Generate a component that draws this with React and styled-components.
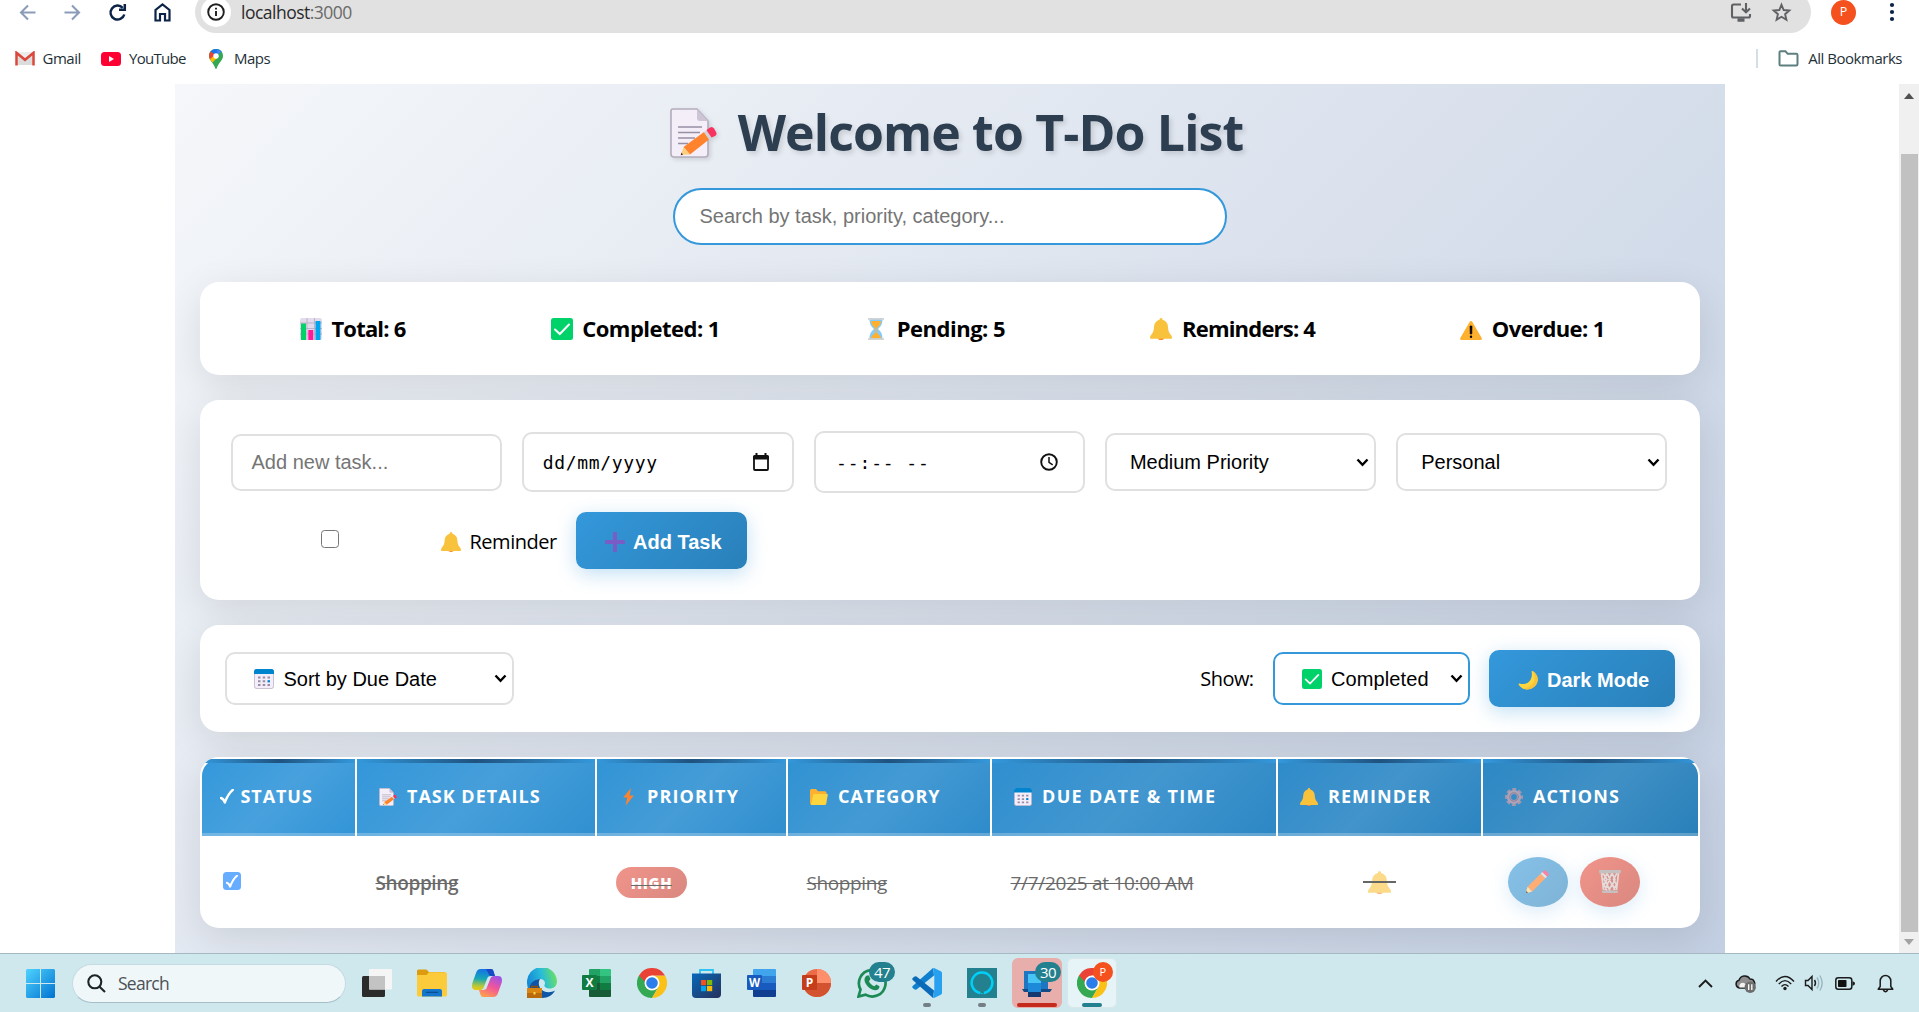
import React from "react";
import styled, { createGlobalStyle, css } from "styled-components";

const UI = `"Open Sans", "Noto Sans", sans-serif`;
const ARIAL = `"Liberation Sans", Arial, sans-serif`;

const Global = createGlobalStyle`
  *, *::before, *::after { box-sizing: border-box; }
  html, body { margin: 0; padding: 0; overflow: hidden; }
  body { font-family: ${UI}; color: #000; background: #fff; }
  svg { display: block; flex: none; }
`;

/* ---------- shared ---------- */

const Text = styled.span`
  font-family: ${(p) => p.$font || UI};
  font-size: ${(p) => p.$size}px;
  font-weight: ${(p) => p.$weight || 400};
  letter-spacing: ${(p) => p.$track || 0}px;
  color: ${(p) => p.$color || "inherit"};
  margin-left: ${(p) => p.$ml || 0}px;
  white-space: pre;
  line-height: 1.3;
`;

const Screen = styled.div`
  width: 1919px;
  height: 1012px;
  display: flex;
  flex-direction: column;
  overflow: hidden;
  background: #fff;
`;

/* ---------- browser chrome ---------- */

const Toolbar = styled.div`
  height: 33px;
  flex: none;
  display: flex;
  align-items: flex-end;
  padding-left: 17px;
  padding-right: 17px;
`;
const NavButtons = styled.div`
  height: 42px;
  width: 178px;
  flex: none;
  display: flex;
  align-items: center;
  gap: 24px;
`;
const Address = styled.div`
  height: 42px;
  width: 1616px;
  flex: none;
  border-radius: 21px;
  background: #e1e1e1;
  display: flex;
  align-items: center;
  padding: 0 19px 0 6px;
`;
const SiteInfo = styled.div`
  width: 30px;
  height: 30px;
  border-radius: 50%;
  background: #fff;
  display: grid;
  place-items: center;
  margin-right: 10px;
`;
const AddressTools = styled.div`
  margin-left: auto;
  display: flex;
  align-items: center;
  gap: 19px;
`;
const Profile = styled.div`
  height: 42px;
  margin-left: 20px;
  flex: 1;
  display: flex;
  align-items: center;
  justify-content: space-between;
`;
const Avatar = styled.div`
  width: 25px;
  height: 25px;
  border-radius: 50%;
  background: #f4511e;
  color: #fff;
  display: grid;
  place-items: center;
`;
const Bookmarks = styled.div`
  height: 51px;
  flex: none;
  display: flex;
  align-items: center;
  padding: 0 17px 0 15px;
  color: #1f3138;
`;
const Bookmark = styled.div`
  display: flex;
  align-items: center;
  gap: ${(p) => p.$gap}px;
  width: ${(p) => p.$width}px;
`;
const Divider = styled.div`
  width: 2px;
  height: 19px;
  background: #d3dee6;
  margin: 0 20px 0 auto;
`;

/* ---------- page ---------- */

const Viewport = styled.div`
  height: 869px;
  flex: none;
  display: flex;
  justify-content: flex-end;
`;
const Page = styled.main`
  width: 1550px;
  height: 869px;
  margin-right: 174px;
  padding: 18px 25px 0;
  background: linear-gradient(135deg, #f5f7fa 0%, #c3cfe2 100%);
  display: flex;
  flex-direction: column;
  overflow: hidden;
`;
const ScrollTrack = styled.div`
  width: 20px;
  background: #f0f0f0;
  display: flex;
  flex-direction: column;
  align-items: center;
  padding-top: 9px;
`;
const ScrollThumb = styled.div`
  width: 17px;
  height: 778px;
  margin: 55px 0 7px;
  background: #c1c1c1;
`;

const Title = styled.h1`
  margin: 0;
  height: 60px;
  display: flex;
  align-items: center;
  justify-content: center;
  padding-left: 13px;
  gap: 21px;
  font-size: 50px;
  font-weight: 700;
  line-height: 60px;
  letter-spacing: -0.87px;
  color: #2c3e50;
  white-space: nowrap;
  text-shadow: 2.5px 2.5px 5px rgba(0, 0, 0, 0.13);
  svg { filter: drop-shadow(2px 2px 2px rgba(0, 0, 0, 0.12)); margin-top: 2px; }
`;
const SearchBox = styled.div`
  width: 554px;
  height: 57px;
  flex: none;
  margin: 26px auto 37px;
  border: 2px solid #3498db;
  border-radius: 31px;
  background: #fff;
  display: flex;
  align-items: center;
  padding-left: 24.5px;
  font: 20px ${ARIAL};
  color: #757575;
`;

const card = css`
  flex: none;
  background: #fff;
  border-radius: 19px;
  box-shadow: 0 10px 38px rgba(0, 0, 0, 0.1);
`;
const Stats = styled.section`
  ${card}
  height: 93px;
  padding: 0 24px 0 26px;
  display: flex;
  align-items: center;
  justify-content: space-around;
`;
const Stat = styled.div`
  display: flex;
  align-items: center;
  padding-left: 2.5px;
  gap: 9.5px;
  svg { margin-top: 1px; }
`;

const Form = styled.section`
  ${card}
  height: 200px;
  margin-top: 25px;
  padding: 31px 32.5px 31px 31px;
  display: flex;
  flex-direction: column;
  gap: 19px;
`;
const Fields = styled.div`
  height: 62px;
  display: grid;
  grid-template-columns: repeat(5, 1fr);
  gap: 20px;
  align-items: center;
`;
const Control = styled.div`
  height: ${(p) => p.$h}px;
  width: ${(p) => (p.$w ? `${p.$w}px` : "auto")};
  border: 2px solid ${(p) => (p.$active ? "#3498db" : "#e0e0e0")};
  border-radius: 10px;
  background: #fff;
  display: flex;
  align-items: center;
  padding: 0 ${(p) => p.$pr || 5}px 0 ${(p) => p.$pl}px;
  font: ${(p) => (p.$mono ? `18px "DejaVu Sans Mono", monospace` : `20px ${ARIAL}`)};
  letter-spacing: ${(p) => p.$track || 0}px;
  color: ${(p) => (p.$muted ? "#757575" : "#000")};
  white-space: pre;
  & > svg:last-child { margin-left: auto; }
`;
const ReminderRow = styled.div`
  height: 57px;
  display: flex;
  align-items: center;
`;
const CheckCell = styled.div`
  width: 197px;
  height: 57px;
  padding-bottom: 4px;
  display: flex;
  justify-content: center;
  align-items: center;
`;
const Checkbox = styled.div`
  width: 18px;
  height: 18px;
  border-radius: 3.5px;
  border: ${(p) => (p.$checked ? "none" : "1.5px solid #767676")};
  background: ${(p) => (p.$checked ? "#66acff" : "#fff")};
  display: grid;
  place-items: center;
`;
const ReminderLabel = styled.div`
  width: 148px;
  padding: 2px 0 0 13px;
  display: flex;
  align-items: center;
`;
const Button = styled.div`
  height: 57px;
  width: ${(p) => p.$w}px;
  padding: 3px 0 0 29px;
  border-radius: 10px;
  background: linear-gradient(135deg, #3498db, #2980b9);
  box-shadow: 0 5px 19px rgba(52, 152, 219, 0.3);
  color: #fff;
  display: flex;
  align-items: center;
  gap: ${(p) => p.$gap}px;
  font: 700 20px ${ARIAL};
  white-space: nowrap;
`;

const Filters = styled.section`
  ${card}
  height: 107px;
  margin-top: 25px;
  padding: 0 25px;
  display: flex;
  align-items: center;
`;
const FilterRight = styled.div`
  margin-left: auto;
  display: flex;
  align-items: center;
  gap: 19px;
`;

/* ---------- table ---------- */

const columns = "153px 238px 189px 202px 284px 203px 215px";
const Table = styled.section`
  ${card}
  height: 171px;
  margin-top: 25px;
  padding: 2px;
  overflow: hidden;
`;
const HeadRow = styled.div`
  height: 77px;
  display: grid;
  grid-template-columns: ${columns};
  gap: 2px;
`;
const shades = [
  ["#3498db", "#3294d7"],
  ["#3397da", "#3090d1"],
  ["#3194d6", "#2f8ece"],
  ["#3092d3", "#2e8bca"],
  ["#2f8fd0", "#2c87c4"],
  ["#2e8bca", "#2b84c0"],
  ["#2c88c5", "#2980b9"],
];
const HeadCell = styled.div`
  position: relative;
  display: flex;
  align-items: center;
  padding: 0 0 2px 18px;
  color: #fff;
  border-radius: ${(p) => (p.$i === 0 ? "17px 0 0 0" : p.$i === 6 ? "0 17px 0 0" : 0)};
  background:
    linear-gradient(135deg, transparent 0%, rgba(255, 255, 255, 0.1) 50%, transparent 100%),
    linear-gradient(135deg, ${(p) => shades[p.$i][0]}, ${(p) => shades[p.$i][1]});
  &::before {
    content: "";
    position: absolute;
    inset: 0 0 auto 0;
    height: 4px;
    background: linear-gradient(90deg, #3498db, #1f527f, #3498db);
  }
  &::after {
    content: "";
    position: absolute;
    inset: auto 0 0 0;
    height: 3px;
    background: rgba(255, 255, 255, 0.25);
  }
`;
const HeadIcon = styled.span`
  width: 18px;
  margin-left: 4px;
  margin-right: 10px;
  display: grid;
  place-items: center;
`;
const BodyRow = styled.div`
  height: 90px;
  display: grid;
  grid-template-columns: ${columns};
  gap: 2px;
  color: #6c6c6c;
`;
const Cell = styled.div`
  display: flex;
  align-items: center;
  padding-top: ${(p) => (p.$pt === undefined ? 4 : p.$pt)}px;
  padding-left: ${(p) => (p.$pl === undefined ? 18.5 : p.$pl)}px;
  gap: ${(p) => p.$gap || 0}px;
`;
const Struck = styled(Text)`
  text-decoration: line-through #666;
  text-decoration-thickness: 1.25px;
`;
const Pill = styled.span`
  width: 71px;
  height: 31px;
  border-radius: 16px;
  background: linear-gradient(135deg, #f1948a, #d98880);
  display: grid;
  place-items: center;
`;
const PillText = styled.span`
  position: relative;
  color: #fff;
  font-size: 15px;
  font-weight: 800;
  letter-spacing: 0.6px;
  line-height: 20px;
  &::after {
    content: "";
    position: absolute;
    left: 0;
    right: 0;
    top: 12px;
    height: 1px;
    background: #6a6a6a;
  }
`;
const StruckIcon = styled.span`
  position: relative;
  width: 33px;
  display: grid;
  place-items: center;
  &::after {
    content: "";
    position: absolute;
    left: 0;
    right: 0;
    top: 10px;
    height: 2px;
    background: #666;
  }
`;
const RoundButton = styled.div`
  width: 60.5px;
  height: 50px;
  border-radius: 50%;
  display: grid;
  place-items: center;
  background: ${(p) =>
    p.$danger ? "linear-gradient(135deg, #f1948a, #d98880)" : "linear-gradient(135deg, #85c1e9, #7fb3d5)"};
  box-shadow: 0 5px 19px rgba(52, 152, 219, 0.18);
`;

/* ---------- taskbar ---------- */

const Taskbar = styled.footer`
  height: 59px;
  flex: none;
  border-top: 1px solid #a6b8c2;
  background: #cee8ee;
  display: flex;
  align-items: center;
  padding: 0 25px 0 26px;
`;
const TaskSearch = styled.div`
  width: 274px;
  height: 39px;
  margin: 0 3px 0 17px;
  padding-left: 14px;
  border-radius: 20px;
  border: 1px solid #c3dbe2;
  border-bottom-color: #a5bfc8;
  background: #f0f7f9;
  display: flex;
  align-items: center;
  color: #4b5256;
`;
const Slot = styled.div`
  position: relative;
  width: 55px;
  height: 58px;
  display: grid;
  place-items: center;
`;
const Tile = styled.div`
  width: 50px;
  height: 50px;
  border-radius: 6px;
  background: ${(p) => p.$bg || "transparent"};
  box-shadow: ${(p) => (p.$outlined ? "inset 0 0 0 1px #d9e6ea" : "none")};
  display: grid;
  place-items: center;
`;
const Indicator = styled.span`
  position: absolute;
  bottom: 5px;
  left: 50%;
  transform: translateX(-50%);
  width: ${(p) => p.$w}px;
  height: 4px;
  border-radius: 2px;
  background: ${(p) => p.$color};
`;
const Badge = styled.span`
  position: absolute;
  top: 8px;
  left: ${(p) => p.$left}px;
  width: ${(p) => p.$w}px;
  height: 20px;
  border-radius: 10px;
  background: ${(p) => p.$bg};
  color: #fff;
  display: grid;
  place-items: center;
  font: ${(p) => p.$size || 15}px/20px ${UI};
  letter-spacing: -0.6px;
`;
const Tray = styled.div`
  margin-left: auto;
  display: flex;
  align-items: center;
`;
const TrayItem = styled.span`
  margin-left: ${(p) => p.$ml}px;
`;

/* ---------- drawings ---------- */

const Stroke = ({ w, h = w, box, color = "#000", sw = 2, children, ...rest }) => (
  <svg width={w} height={h} viewBox={box} fill="none" stroke={color} strokeWidth={sw} {...rest}>
    {children}
  </svg>
);

const Chevron = () => (
  <Stroke w={13} h={9} box="0 0 13 9" sw={2.4}>
    <path d="M1.500 1.500 L6.500 6.800 L11.500 1.500" />
  </Stroke>
);

const Memo = ({ w, h }) => (
  <svg width={w} height={h} viewBox="0 0 47 50" preserveAspectRatio="none">
    <path d="M3 1 H27 L38 13 V46 a3 3 0 0 1 -3 3 H4 a3 3 0 0 1 -3 -3 V3 a2 2 0 0 1 2 -2z" fill="#f3eef8" stroke="#b4acbc" strokeWidth="1.6" />
    <path d="M27 1 L38 13 H30 a3 3 0 0 1 -3 -3z" fill="#cdc4d6" />
    <path d="M8 19 H32 M8 24.500 H30 M8 30 H25 M8 35.500 H18" stroke="#998ea4" strokeWidth="1.500" />
    <path d="M34 24 L39 31.500 L20 46.500 L13.500 39z" fill="#ff822d" />
    <path d="M13.500 39 L20 46.500 L11 46.800z" fill="#ffce7c" />
    <path d="M11.400 44.500 L13 46.800 L10.800 47.200z" fill="#402a32" />
    <path d="M34 24 L36.500 22 L41.500 29.500 L39 31.500z" fill="#d3d3d3" />
    <path d="M36.500 22 L40 19.500 a3 3 0 0 1 4 1 L46 24 a3 3 0 0 1 -1 4 L41.500 29.500z" fill="#f8315f" />
  </svg>
);
const Bars = () => (
  <svg width="22" height="22" viewBox="0 0 22 22">
    <rect width="22" height="22" rx="2" fill="#e3daec" />
    <path d="M0 5 H22 M0 10.500 H22 M0 16 H22 M7 0 V22 M14.500 0 V22" stroke="#b9aec6" strokeWidth=".9" />
    <rect x="1" y="5.500" width="5" height="16.500" fill="#00d26a" />
    <rect x="8.300" y="12" width="5" height="10" fill="#ff1a9b" />
    <rect x="15.500" y="3" width="5" height="19" fill="#00a6ed" />
  </svg>
);
const GreenCheck = ({ s = 22 }) => (
  <svg width={s} height={s} viewBox="0 0 22 22">
    <rect width="22" height="22" rx="2.500" fill="#00d26a" />
    <path d="M4 11.500 L8.800 16 L18 6.500" fill="none" stroke="#fff" strokeWidth="2" strokeLinecap="round" />
  </svg>
);
const Hourglass = () => (
  <svg width="22" height="22" viewBox="0 0 22 22">
    <path d="M4.500 1 H17.500 C17.500 6 16 8.500 13 11 C16 13.500 17.500 16 17.500 21 H4.500 C4.500 16 6 13.500 9 11 C6 8.500 4.500 6 4.500 1z" fill="#83cbff" />
    <path d="M6 3 H16 C16 6.500 13.500 8 11.700 10.500 V14 C13 17 16 17.500 16.300 20.500 H5.700 C6 17.500 9 17 10.300 14 V10.500 C8.500 8 6 6.500 6 3z" fill="#ffb02e" />
    <path d="M3 0 H19 V1.800 H3z M3 20.200 H19 V22 H3z" fill="#d3d3d3" />
  </svg>
);
const Bell = ({ s = 22, faded }) => (
  <svg width={s} height={s} viewBox="0 0 22 22" opacity={faded ? 0.6 : 1}>
    <path d="M8 20 a3 2 0 0 0 6 0z" fill="#ff822d" />
    <path d="M11 0 C12 0 12.500 .8 12.500 1.800 C16 2.800 18 5.500 18 9 C18.200 13 19 14.500 20.500 16.500 C21.500 17.500 22 18.500 22 20 a.8 .8 0 0 1 -.8 .8 H.8 A.8 .8 0 0 1 0 20 C0 18.500 .5 17.500 1.500 16.500 C3 14.500 3.800 13 4 9 C4 5.500 6 2.800 9.500 1.800 C9.500 .8 10 0 11 0z" fill="#f9c23c" />
  </svg>
);
const Warning = () => (
  <svg width="22" height="22" viewBox="0 0 22 22">
    <path d="M11 3 C11.600 3 12 3.300 12.400 4 L21.700 20 C22.200 21 21.800 22 20.700 22 H1.300 C.2 22 -.2 21 .3 20 L9.600 4 C10 3.300 10.400 3 11 3z" fill="#ffb02e" />
    <path d="M10 8 h2 l-.2 8 h-1.600z" fill="#000" stroke="#000" strokeWidth=".6" />
    <circle cx="11" cy="18.800" r="1.200" />
  </svg>
);
const Calendar = ({ s = 20 }) => (
  <svg width={s} height={s} viewBox="0 0 20 20">
    <rect x=".4" y=".4" width="19.200" height="19.200" rx="2.500" fill="#f4eefa" stroke="#b8aec4" strokeWidth=".8" />
    <path d="M0 5 V2.500 a2.500 2.500 0 0 1 2.500 -2.500 H17.500 a2.500 2.500 0 0 1 2.500 2.500 V5z" fill="#0084ce" />
    <path d="M4 8.500 h2.500 M8.700 8.500 h2.500 M13.500 8.500 h2.500 M4 12.300 h2.500 M8.700 12.300 h2.500 M4 16 h2.500 M8.700 16 h2.500 M13.500 16 h2.500" stroke="#998ea4" strokeWidth="2" />
    <path d="M13.500 12.300 h2.500" stroke="#0084ce" strokeWidth="2.200" />
  </svg>
);
const Plus = () => (
  <svg width="20" height="20" viewBox="0 0 20 20">
    <path d="M10 1.600 V18.400 M1.600 10 H18.400" stroke="#7a5cc6" strokeWidth="4" strokeLinecap="round" />
  </svg>
);
const Moon = () => (
  <svg width="20" height="20" viewBox="0 0 20 20">
    <path d="M14.500 1 C19 3.500 21 8.500 19 13 C16.500 19 9 21 4 18 C2 16.800 1 15.500 .6 14.300 C.4 13.700 1 13.300 1.600 13.500 C6 15 10.500 13.500 12.700 9.500 C14 7 14.200 4.300 13.600 1.800 C13.500 1.200 14 .7 14.500 1z" fill="#fcd53f" />
    <path d="M14.500 1 C19 3.500 21 8.500 19 13 C16.500 19 9 21 4 18 C9 18.500 14 16.500 16 11.500 C17.500 8 16.500 4 14.500 1z" fill="#f9c23c" />
  </svg>
);
const Bolt = () => (
  <svg width="11" height="18" viewBox="0 0 11 18">
    <path d="M8 0 L.2 9.500 H4.200 L2.600 17.800 L10.800 7.600 H6.500z" fill="#ff822d" />
  </svg>
);
const Folder = () => (
  <svg width="18" height="18" viewBox="0 0 18 18">
    <path d="M0 2.500 a1.500 1.500 0 0 1 1.500 -1.500 H6 L8 3.200 H15 a1.500 1.500 0 0 1 1.500 1.500 V15 a2 2 0 0 1 -2 2 H2 a2 2 0 0 1 -2 -2z" fill="#ffb02e" />
    <path d="M4.500 6 H16.800 a1 1 0 0 1 1 1.300 L16 15.500 a2 2 0 0 1 -2 1.500 H1 L3 7.200 a1.500 1.500 0 0 1 1.500 -1.200z" fill="#fcd53f" />
  </svg>
);
const Gear = () => (
  <svg width="18" height="18" viewBox="0 0 18 18">
    <circle cx="9" cy="9" r="7.700" fill="none" stroke="#a498ae" strokeWidth="2.600" strokeDasharray="3.750 2.297" strokeDashoffset="1.875" />
    <circle cx="9" cy="9" r="5" fill="none" stroke="#aea2b8" strokeWidth="4.200" />
    <circle cx="9" cy="9" r="4.200" fill="none" stroke="#8c7f97" strokeWidth="1" />
  </svg>
);
const Tick = ({ w, h }) => (
  <Stroke w={w} h={h} box="0 0 14 15" color="#fff" sw={2.4}>
    <path d="M1 9 C2.500 9.500 4 11 4.800 13.500 C6.500 9 9 4 12.800 .8" strokeLinecap="round" strokeLinejoin="round" />
  </Stroke>
);
const Pencil = () => (
  <svg width="23" height="23" viewBox="0 0 22 22">
    <path d="M14 3.500 L18.500 8 L6 20.500 L1.500 16z" fill="#ffad73" />
    <path d="M1.500 16 L6 20.500 L1 22 Q0 22 0 21z" fill="#ffe0a8" />
    <path d="M.4 20 L2 21.700 L.6 22 Q0 22 0 21.400z" fill="#7a5f62" />
    <path d="M14 3.500 L15.700 1.800 L20.200 6.300 L18.500 8z" fill="#e4e2e6" />
    <path d="M15.700 1.800 L17 .6 Q18 -.3 19 .6 L21.400 3 Q22.300 4 21.400 5 L20.200 6.300z" fill="#f9809f" />
  </svg>
);
const Trash = () => (
  <svg width="22" height="23" viewBox="0 0 22 22" preserveAspectRatio="none">
    <path d="M1.500 2 H20.500 L18 20 H4z" fill="#d98f88" />
    <path d="M4 3 L8 9 L5 14 L8 20 M8 3 L5 9 L8.500 14 L6 19 M8 3 L11 9 L8 14 L11 20 M13 3 L10 9 L13 14 L10 19 M13 3 L16 9 L13.500 14 L16 19 M18 3 L14.500 9 L17.500 14 L14.500 19 M2.500 3 L4.500 19 M19.500 3 L17.500 19" fill="none" stroke="#e4dada" strokeWidth="1.700" />
    <path d="M0 0 H22 L21.600 3 H.4z M3 19.500 H19 L18.700 22 H3.300z" fill="#c5c1c1" />
  </svg>
);

const ChromeIcon = () => (
  <svg width="30" height="30" viewBox="0 0 30 30">
    <path d="M2 7.500 A15 15 0 0 0 15 30 L21.500 18.750 L15 15z" fill="#34a853" />
    <path d="M28 7.500 A15 15 0 0 1 15 30 L21.500 18.750 L15 7.500z" fill="#fbc116" />
    <path d="M2 7.500 L8.500 18.750 L15 15 V7.500z" fill="#34a853" />
    <path d="M2 7.500 A15 15 0 0 1 28 7.500 H15 L8 14z" fill="#ea4335" />
    <circle cx="15" cy="15" r="7.500" fill="#fff" />
    <circle cx="15" cy="15" r="5.800" fill="#2b7de9" />
  </svg>
);

const officeText = { fontFamily: "Open Sans, sans-serif", fontWeight: 700, fill: "#fff", textAnchor: "middle" };

const Windows = () => (
  <svg width="29" height="29" viewBox="0 0 29 29">
    <defs>
      <linearGradient id="win" x1="0" y1="0" x2="1" y2="1">
        <stop offset="0" stopColor="#4fd3ff" />
        <stop offset="1" stopColor="#0072d0" />
      </linearGradient>
    </defs>
    <path d="M1 0 H14 V14 H0 V1z M15 0 H28 L29 1 V14 H15z M0 15 H14 V29 H1 L0 28z M15 15 H29 V28 L28 29 H15z" fill="url(#win)" />
  </svg>
);
const TaskView = () => (
  <svg width="30" height="28" viewBox="0 0 30 28">
    <rect y="7" width="23" height="21" rx="1.500" fill="#2b2b2b" />
    <rect x="7" width="23" height="20.500" rx="1" fill="#f5f5f5" />
    <rect x="7" y="7" width="16" height="13.500" fill="#c3c3c3" />
  </svg>
);
const Explorer = () => (
  <svg width="30" height="28" viewBox="0 0 30 28">
    <path d="M0 6 V2 a1.500 1.500 0 0 1 1.500 -1.500 H9.500 L12 3 H28 V9 H0z" fill="#dd9b10" />
    <path d="M0 6 H9.500 L12 3.200 H28.500 A1.500 1.500 0 0 1 30 4.700 V26 a1.500 1.500 0 0 1 -1.500 1.500 H1.500 A1.500 1.500 0 0 1 0 26z" fill="#fccb3c" />
    <path d="M5 27.500 V22 a2 2 0 0 1 2 -2 H23 a2 2 0 0 1 2 2 V27.500z" fill="#1376cc" />
    <path d="M9 23.300 H21" stroke="#0a4a8c" strokeWidth="1.200" />
  </svg>
);
const Copilot = () => (
  <svg width="30" height="28" viewBox="0 0 30 28">
    <defs>
      <linearGradient id="cpA" x1="0.3" y1="0" x2="0.2" y2="1">
        <stop offset="0" stopColor="#1673e6" />
        <stop offset=".45" stopColor="#17a7b5" />
        <stop offset=".8" stopColor="#b5c83a" />
        <stop offset="1" stopColor="#f2c80f" />
      </linearGradient>
      <linearGradient id="cpB" x1="0.8" y1="0" x2="0.3" y2="1">
        <stop offset="0" stopColor="#9b54e8" />
        <stop offset=".5" stopColor="#f0559c" />
        <stop offset="1" stopColor="#ff9d4d" />
      </linearGradient>
    </defs>
    <path d="M9 0 H19 C21 0 21.500 2 22 4 L23 7 H19 C16.500 7 15.500 8 15 10 L12 17.500 C11.300 20 10 21 8 21 H4 C0 21 -.5 18 .4 14 L4 4 C5 1.500 6 0 9 0z" fill="url(#cpA)" />
    <path d="M14 0 H19 C21 0 21.500 2 22 4 L23 7 H19.500 C17.500 7 16.800 6 16.300 4z" fill="#1a49c4" />
    <path d="M21 28 H11 C9 28 8.500 26 8 24 L7 21 H11 C13.500 21 14.500 20 15 18 L18 10.500 C18.700 8 20 7 22 7 H26 C30 7 30.500 10 29.600 14 L26 24 C25 26.500 24 28 21 28z" fill="url(#cpB)" />
  </svg>
);
const Edge = () => (
  <svg width="30" height="30" viewBox="0 0 30 30">
    <defs>
      <linearGradient id="edge" x1="0" y1=".5" x2="1" y2=".3">
        <stop offset="0" stopColor="#1389d8" />
        <stop offset=".5" stopColor="#29bcd8" />
        <stop offset="1" stopColor="#6fe35a" />
      </linearGradient>
    </defs>
    <path d="M0 15 A15 15 0 0 1 30 13 C30 18 27 20.500 22.500 20.500 C19 20.500 17 19 17.500 17 C19 14 17 11 13 11 C6 11 2 17 2 22 Q0 19 0 15z" fill="url(#edge)" />
    <path d="M2 22 C2 15 7 11 13 11 C11 14 11.500 19 15 22 C19 25 24 24.500 28 22.500 C26 27 21 30 15 30 C9 30 4 27 2 22z" fill="#0f55a5" />
    <path d="M0 20 H15 V30 H0z" fill="#b96a0d" />
    <path d="M0 20 H15 V25 H0z" fill="#d98512" />
    <path d="M4.500 20 V18.500 H10.500 V20" fill="none" stroke="#8f4c08" strokeWidth="1.400" />
    <rect x="6.500" y="24" width="2" height="2.500" fill="#ffd34d" />
  </svg>
);
const Excel = () => (
  <svg width="29" height="28" viewBox="0 0 29 28">
    <path d="M7 1 a1 1 0 0 1 1 -1 H18 V7 H7z" fill="#21a366" />
    <path d="M18 0 H28 a1 1 0 0 1 1 1 V7 H18z" fill="#33c481" />
    <path d="M7 7 H18 V14 H7z" fill="#107c41" />
    <path d="M18 7 H29 V14 H18z" fill="#21a366" />
    <path d="M7 14 H18 V21 H7z" fill="#185c37" />
    <path d="M18 14 H29 V21 H18z" fill="#107c41" />
    <path d="M7 21 H29 V27 a1 1 0 0 1 -1 1 H8 a1 1 0 0 1 -1 -1z" fill="#185c37" />
    <rect y="6" width="15" height="15" rx="1" fill="#107c41" />
    <text x="7.500" y="18" fontSize="12" {...officeText}>X</text>
  </svg>
);
const Word = () => (
  <svg width="29" height="28" viewBox="0 0 29 28">
    <path d="M6 1 a1 1 0 0 1 1 -1 H28 a1 1 0 0 1 1 1 V7 H6z" fill="#41a5ee" />
    <path d="M6 7 H29 V14 H6z" fill="#2b7cd3" />
    <path d="M6 14 H29 V21 H6z" fill="#185abd" />
    <path d="M6 21 H29 V27 a1 1 0 0 1 -1 1 H7 a1 1 0 0 1 -1 -1z" fill="#103f91" />
    <rect y="6" width="15" height="15" rx="1" fill="#185abd" />
    <text x="7.500" y="18" fontSize="11.500" {...officeText}>W</text>
  </svg>
);
const PowerPoint = () => (
  <svg width="29" height="28" viewBox="0 0 29 28">
    <circle cx="15" cy="14" r="14" fill="#ed6c47" />
    <path d="M15 0 A14 14 0 0 1 29 14 H15z" fill="#ff8f6b" />
    <path d="M1 14 H29 A14 14 0 0 1 1 14z" fill="#d35230" />
    <rect y="6" width="15" height="15" rx="1" fill="#c43e1c" />
    <text x="7.500" y="18" fontSize="12" {...officeText}>P</text>
  </svg>
);
const Store = () => (
  <svg width="29" height="29" viewBox="0 0 29 29">
    <defs>
      <linearGradient id="store" x1="0" y1="0" x2="1" y2="1">
        <stop offset="0" stopColor="#0669bb" />
        <stop offset="1" stopColor="#28305a" />
      </linearGradient>
    </defs>
    <path d="M8 5.500 V1 H21 V5.500" fill="none" stroke="#2fc2f5" strokeWidth="1.800" />
    <path d="M0 4.500 H29 V25 a4 4 0 0 1 -4 4 H4 a4 4 0 0 1 -4 -4z" fill="url(#store)" />
    <rect x="9" y="11" width="5.200" height="5.200" fill="#f25022" />
    <rect x="15" y="11" width="5.200" height="5.200" fill="#7fba00" />
    <rect x="9" y="17" width="5.200" height="5.200" fill="#00a4ef" />
    <rect x="15" y="17" width="5.200" height="5.200" fill="#ffb900" />
  </svg>
);
const WhatsApp = () => (
  <svg width="30" height="30" viewBox="0 0 30 30">
    <path d="M1.500 28.500 L3.500 21.500 A13.300 13.300 0 1 1 8.500 26.700z" fill="none" stroke="#1c8a54" strokeWidth="2.700" />
    <path d="M10 7.500 L12 7.500 L13.500 11 L12 13.200 C13 15.500 15 17.300 17.300 18.200 L19.300 16.500 L22.500 18.200 C22.500 21 20.500 22.500 18 22.300 C12.500 21.500 8.500 17 7.500 12.500 C7.300 10 8.500 8 10 7.500z" fill="#1c8a54" />
  </svg>
);
const VSCode = () => (
  <svg width="30" height="30" viewBox="0 0 30 30">
    <path d="M22 7.500 L4.500 21.500 L3 21.800 L.4 19.800 V18.200 L21 0z" fill="#0f7fd0" />
    <path d="M22 22.500 L4.500 8.500 L3 8.200 L.4 10.200 V11.800 L21 30z" fill="#0a6ab8" />
    <path d="M22 0 L28.800 3.200 Q30 3.800 30 5 V25 Q30 26.200 28.800 26.800 L22 30 L21 29.500 L22.300 22 V8 L21 .5z" fill="#27a0f0" />
  </svg>
);
const Alexa = () => (
  <svg width="30" height="30" viewBox="0 0 30 30">
    <rect width="30" height="30" fill="#23808f" />
    <path d="M13 25 A10.300 10.300 0 1 1 17 25" fill="none" stroke="#00d0f8" strokeWidth="2.500" />
    <path d="M12 23 Q15.500 27.500 19 24.500 L17 26 H14z" fill="#00d0f8" />
  </svg>
);
const PhoneLink = () => (
  <svg width="30" height="27" viewBox="0 0 30 27">
    <rect x="2" y="1" width="24" height="19" fill="#1c76c2" />
    <path d="M0 19 H30 L28 22 H2z" fill="#144b84" />
    <rect x="6" y="4" width="13" height="23" rx="1" fill="#1c8ad8" />
    <path d="M6 4 H19 V13 H6z" fill="#46c5f5" />
    <path d="M6 22 H19 V27 H6z" fill="#123a70" />
  </svg>
);

const taskbarApps = [
  { icon: <TaskView /> },
  { icon: <Explorer /> },
  { icon: <Copilot /> },
  { icon: <Edge /> },
  { icon: <Excel /> },
  { icon: <ChromeIcon /> },
  { icon: <Store /> },
  { icon: <Word /> },
  { icon: <PowerPoint /> },
  { icon: <WhatsApp />, badge: { t: "47", left: 25, w: 26, bg: "#23808f" } },
  { icon: <VSCode />, bar: { w: 8, c: "#737f84" } },
  { icon: <Alexa />, bar: { w: 8, c: "#737f84" } },
  { icon: <PhoneLink />, tile: "#e8aeab", badge: { t: "30", left: 26, w: 26, bg: "#23808f" }, bar: { w: 40, c: "#c42b1c" } },
  { icon: <ChromeIcon />, tile: "#e6f3f7", outlined: true, badge: { t: "P", left: 28.5, w: 20, bg: "#f4511e", size: 11 }, bar: { w: 20, c: "#23808f" } },
];

const stats = [
  { icon: <Bars />, text: "Total: 6", track: -0.8 },
  { icon: <GreenCheck />, text: "Completed: 1", track: -0.52 },
  { icon: <Hourglass />, text: "Pending: 5", track: -0.48 },
  { icon: <Bell />, text: "Reminders: 4", track: -0.8 },
  { icon: <Warning />, text: "Overdue: 1", track: -0.62 },
];

const headings = [
  { text: "STATUS", track: 0.92 },
  { icon: <Memo w={18} h={18} />, text: "TASK DETAILS", track: 0.99 },
  { icon: <Bolt />, text: "PRIORITY", track: 1.13 },
  { icon: <Folder />, text: "CATEGORY", track: 0.94 },
  { icon: <Calendar s={18} />, text: "DUE DATE & TIME", track: 1.34 },
  { icon: <Bell s={18} />, text: "REMINDER", track: 1.03 },
  { icon: <Gear />, text: "ACTIONS", track: 1.13 },
];

function BrowserChrome() {
  return (
    <>
      <Toolbar>
        <NavButtons>
          <Stroke w={21} box="0 0 21 21" color="#8a9cb8" sw={2.1}>
            <path d="M18.500 10.500 H4 M11 3.500 L4 10.500 L11 17.500" />
          </Stroke>
          <Stroke w={21} box="0 0 21 21" color="#8a9cb8" sw={2.1}>
            <path d="M2.500 10.500 H17 M10 3.500 L17 10.500 L10 17.500" />
          </Stroke>
          <Stroke w={21} box="0 0 21 21" color="#0b2347" sw={2.5}>
            <path d="M17.300 12.500 A7 7 0 1 1 15.700 5.800" />
            <path d="M17.800 2 V7.800 H12" />
          </Stroke>
          <Stroke w={21} box="0 0 21 21" color="#0b2347" sw={2.2}>
            <path d="M3.500 18.500 V8 L10.500 2.300 L17.500 8 V18.500 H13 V12 H8 V18.500z" />
          </Stroke>
        </NavButtons>
        <Address>
          <SiteInfo>
            <Stroke w={18} box="0 0 18 18" color="#1f1f1f" sw={1.9}>
              <circle cx="9" cy="9" r="7.800" />
              <path d="M9 8 V13 M9 4.700 V6.500" />
            </Stroke>
          </SiteInfo>
          <Text $size={17.5} $track={-0.51} $color="#2a2a2a">localhost</Text>
          <Text $size={17.5} $track={-0.55} $color="#6a6a6a">:3000</Text>
          <AddressTools>
            <Stroke w={22} box="0 0 22 22" color="#5f6164" sw={2.1}>
              <path d="M11 3.500 H3.500 Q2 3.500 2 5 V15 Q2 16.500 3.500 16.500 H18.500 Q20 16.500 20 15 V13" />
              <path d="M16 2 V11 M12 7.500 L16 11.300 L20 7.500" />
              <path d="M7.500 19 H14.500" strokeWidth="3.500" />
            </Stroke>
            <Stroke w={21} box="0 0 21 21" color="#5f6164" sw={1.9}>
              <path d="M10.500 2.800 L12.700 8 L18.300 8.500 L14.100 12.200 L15.400 17.700 L10.500 14.800 L5.600 17.700 L6.900 12.200 L2.700 8.500 L8.300 8z" />
            </Stroke>
          </AddressTools>
        </Address>
        <Profile>
          <Avatar>
            <Text $size={12.5}>P</Text>
          </Avatar>
          <svg width="20" height="20" viewBox="0 0 20 20" fill="#0b2347">
            <circle cx="10" cy="3" r="2.100" />
            <circle cx="10" cy="10" r="2.100" />
            <circle cx="10" cy="17" r="2.100" />
          </svg>
        </Profile>
      </Toolbar>
      <Bookmarks>
        <Bookmark $gap={7.5} $width={86}>
          <svg width="20" height="15" viewBox="0 0 20 15">
            <path d="M1 1 H19 V14 H1z" fill="#ececec" />
            <path d="M3 14 V4 L10 9.500 L17 4 V14" fill="#dcdcdc" />
            <path d="M1.500 14.500 V1.800 L10 8.800 L18.500 1.800 V14.500" fill="none" stroke="#d9483b" strokeWidth="2.500" />
          </svg>
          <Text $size={15} $track={-0.48}>Gmail</Text>
        </Bookmark>
        <Bookmark $gap={8} $width={107}>
          <svg width="20" height="14" viewBox="0 0 20 14">
            <rect width="20" height="14" rx="3.500" fill="#ff0033" />
            <path d="M8 4 L13 7 L8 10z" fill="#fff" />
          </svg>
          <Text $size={15} $track={-0.71}>YouTube</Text>
        </Bookmark>
        <Bookmark $gap={10} $width={80}>
          <svg width="16" height="20" viewBox="0 0 16 20">
            <path d="M8 0 C12.500 0 15 3 15 7 C15 11.500 10.500 13.500 8.600 19.500 Q8 20.500 7.400 19.500 C5.500 13.500 1 11.500 1 7 C1 3 3.500 0 8 0z" fill="#34a853" />
            <path d="M2.500 2.500 L8 7 L13.500 2.500 C12 .8 10 0 8 0 C6 0 4 .8 2.500 2.500z" fill="#1a73e8" />
            <path d="M2.500 2.500 C1 4.500 .5 7.500 2 10.500 L8 6z" fill="#ea4335" />
            <path d="M2 10 L7 6 L11 7 L4.500 13.500 Q3 12 2 10z" fill="#fbbc04" />
            <path d="M13.500 2.500 L9.500 6 L9 1 Q12 .8 13.500 2.500z" fill="#4285f4" />
            <circle cx="8" cy="7" r="2.700" fill="#fff" />
          </svg>
          <Text $size={15} $track={-0.5}>Maps</Text>
        </Bookmark>
        <Divider />
        <Stroke w={21} h={17} box="0 0 21 17" color="#5d7f80" sw={2}>
          <path d="M1.500 2.500 Q1.500 1.300 2.700 1.300 H7.500 L9.700 3.800 H18.300 Q19.500 3.800 19.500 5 V14.300 Q19.500 15.500 18.300 15.500 H2.700 Q1.500 15.500 1.500 14.300z" />
        </Stroke>
        <Text $size={15} $track={-0.48} $ml={9.5}>All Bookmarks</Text>
      </Bookmarks>
    </>
  );
}

function TaskForm() {
  return (
    <Form>
      <Fields>
        <Control $h={57} $pl={18.5} $muted>Add new task...</Control>
        <Control $h={60} $pl={18.5} $pr={23} $mono $track={0.65}>
          dd/mm/yyyy
          <svg width="16" height="18" viewBox="0 0 16 18">
            <path d="M1 4 V16 a1 1 0 0 0 1 1 H14 a1 1 0 0 0 1 -1 V4" fill="none" stroke="#111" strokeWidth="1.800" />
            <path d="M0 3.500 Q0 2 1.500 2 H2.500 V0 H4.500 V2 H11.500 V0 H13.500 V2 H14.500 Q16 2 16 3.500 V6.500 H0z" fill="#111" />
          </svg>
        </Control>
        <Control $h={62} $pl={20.5} $pr={24.5} $mono $track={0.85}>
          --:-- --
          <Stroke w={18} box="0 0 18 18" color="#111" sw={1.9}>
            <circle cx="9" cy="9" r="7.800" />
            <path d="M9 4 V9.300 L12.700 11.800" strokeWidth="1.500" />
          </Stroke>
        </Control>
        <Control $h={58} $pl={23}>Medium Priority<Chevron /></Control>
        <Control $h={58} $pl={23}>Personal<Chevron /></Control>
      </Fields>
      <ReminderRow>
        <CheckCell>
          <Checkbox />
        </CheckCell>
        <ReminderLabel>
          <Bell s={20} />
          <Text $size={20} $weight={500} $track={-0.48} $ml={8.5}>Reminder</Text>
        </ReminderLabel>
        <Button $w={171} $gap={8}>
          <Plus />
          Add Task
        </Button>
      </ReminderRow>
    </Form>
  );
}

function TaskTable() {
  return (
    <Table>
      <HeadRow>
        {headings.map((h, i) => (
          <HeadCell key={h.text} $i={i}>
            {h.icon ? <HeadIcon>{h.icon}</HeadIcon> : <Tick w={14} h={15} />}
            <Text $size={18} $weight={700} $track={h.track} $ml={h.icon ? 0 : 6.5}>{h.text}</Text>
          </HeadCell>
        ))}
      </HeadRow>
      <BodyRow>
        <Cell $pl={21} $pt={0}>
          <Checkbox $checked>
            <Tick w={12} h={13} />
          </Checkbox>
        </Cell>
        <Cell><Struck $size={19} $weight={600} $track={-0.38}>Shopping</Struck></Cell>
        <Cell $pl={19} $pt={3}><Pill><PillText>HIGH</PillText></Pill></Cell>
        <Cell><Struck $size={19} $track={-0.4}>Shopping</Struck></Cell>
        <Cell><Struck $size={19} $track={-0.29}>7/7/2025 at 10:00 AM</Struck></Cell>
        <Cell $pl={85} $pt={3}><StruckIcon><Bell s={23} faded /></StruckIcon></Cell>
        <Cell $pl={24.5} $gap={11.5} $pt={1}>
          <RoundButton><Pencil /></RoundButton>
          <RoundButton $danger><Trash /></RoundButton>
        </Cell>
      </BodyRow>
    </Table>
  );
}

function SystemTray() {
  return (
    <Tray>
      <TrayItem>
        <Stroke w={15} h={9} box="0 0 15 9" color="#1b1b1b" sw={1.9}>
          <path d="M1 8 L7.500 1.500 L14 8" />
        </Stroke>
      </TrayItem>
      <TrayItem $ml={22}>
        <svg width="21" height="19" viewBox="0 0 21 19">
          <path d="M4.500 14 A4 4 0 0 1 4 6.200 A6 6 0 0 1 15 5 A4.500 4.500 0 0 1 18 13 V14z" fill="#8e8e8e" stroke="#1a1a1a" strokeWidth="1.500" />
          <path d="M4.500 13.500 A3.500 3.500 0 0 1 9 9 L16 13.500z" fill="#f2f2f2" />
          <circle cx="15.200" cy="13.200" r="5.700" fill="#6e6e6e" />
          <path d="M13.700 10.300 V16 M16.800 10.300 V16" stroke="#fff" strokeWidth="1.300" />
        </svg>
      </TrayItem>
      <TrayItem $ml={19}>
        <Stroke w={20} h={16} box="0 0 20 16" color="#1b1b1b" sw={1.4}>
          <path d="M1 6.500 Q10 -3.500 19 6.500 M3.800 9 Q10 2.200 16.200 9 M6.500 11.500 Q10 7.800 13.500 11.500" />
          <circle cx="10" cy="13.500" r="1.700" fill="#1b1b1b" stroke="none" />
        </Stroke>
      </TrayItem>
      <TrayItem $ml={9}>
        <Stroke w={21} h={18} box="0 0 21 18" color="#1b1b1b" sw={1.4}>
          <path d="M1.500 6.500 H4 L8 2.500 V15.500 L4 11.500 H1.500z" />
          <path d="M10.500 6 Q12.500 9 10.500 12" />
          <path d="M13 3.500 Q16.500 9 13 14.500 M15.800 1.500 Q20.500 9 15.800 16.500" stroke="#9ab6bd" />
        </Stroke>
      </TrayItem>
      <TrayItem $ml={10}>
        <svg width="20" height="13" viewBox="0 0 20 13">
          <rect x=".8" y=".8" width="16" height="11.400" rx="2.500" fill="none" stroke="#1b1b1b" strokeWidth="1.500" />
          <rect x="3" y="3" width="8.500" height="7" rx=".8" fill="#111" />
          <path d="M17.500 4.200 Q20 4.500 20 6.500 Q20 8.500 17.500 8.800z" fill="#1b1b1b" />
        </svg>
      </TrayItem>
      <TrayItem $ml={22}>
        <Stroke w={17} h={19} box="0 0 17 19" color="#1b1b1b" sw={1.5}>
          <path d="M3.200 12.500 V7 A5.300 5.500 0 0 1 13.800 7 V12.500 L15.800 15.200 H1.200z" strokeLinejoin="round" />
          <path d="M6.300 16 Q8.500 19.500 10.700 16" />
        </Stroke>
      </TrayItem>
    </Tray>
  );
}

export default function App() {
  return (
    <Screen>
      <Global />
      <BrowserChrome />
      <Viewport>
        <Page>
          <Title>
            <Memo w={47} h={50} />
            <span>Welcome to T-Do List</span>
          </Title>
          <SearchBox>Search by task, priority, category...</SearchBox>
          <Stats>
            {stats.map((s) => (
              <Stat key={s.text}>
                {s.icon}
                <Text $size={22} $weight={700} $track={s.track}>{s.text}</Text>
              </Stat>
            ))}
          </Stats>
          <TaskForm />
          <Filters>
            <Control $h={53} $w={289} $pl={26.5}>
              <Calendar />
              <Text $font={ARIAL} $size={20} $ml={10}>Sort by Due Date</Text>
              <Chevron />
            </Control>
            <FilterRight>
              <Text $size={20} $track={-0.57}>Show:</Text>
              <Control $h={53} $w={197.5} $pl={27.5} $active>
                <GreenCheck s={20} />
                <Text $font={ARIAL} $size={20} $ml={9} $track={0.1}>Completed</Text>
                <Chevron />
              </Control>
              <Button $w={186} $gap={9}>
                <Moon />
                Dark Mode
              </Button>
            </FilterRight>
          </Filters>
          <TaskTable />
        </Page>
        <ScrollTrack>
          <svg width="10" height="6" viewBox="0 0 10 6"><path d="M0 6 L5 0 L10 6z" fill="#505050" /></svg>
          <ScrollThumb />
          <svg width="10" height="6" viewBox="0 0 10 6"><path d="M0 0 L5 6 L10 0z" fill="#a3a3a3" /></svg>
        </ScrollTrack>
      </Viewport>
      <Taskbar>
        <Windows />
        <TaskSearch>
          <Stroke w={19} h={19} box="0 0 19 19" color="#1d2326" sw={2.1}>
            <circle cx="7.800" cy="7.800" r="6.500" />
            <path d="M12.300 12.500 L18 18" />
          </Stroke>
          <Text $size={17.5} $track={-0.74} $ml={12}>Search</Text>
        </TaskSearch>
        {taskbarApps.map((a, i) => (
          <Slot key={i}>
            <Tile $bg={a.tile} $outlined={a.outlined}>{a.icon}</Tile>
            {a.badge && <Badge $left={a.badge.left} $w={a.badge.w} $bg={a.badge.bg} $size={a.badge.size}>{a.badge.t}</Badge>}
            {a.bar && <Indicator $w={a.bar.w} $color={a.bar.c} />}
          </Slot>
        ))}
        <SystemTray />
      </Taskbar>
    </Screen>
  );
}
